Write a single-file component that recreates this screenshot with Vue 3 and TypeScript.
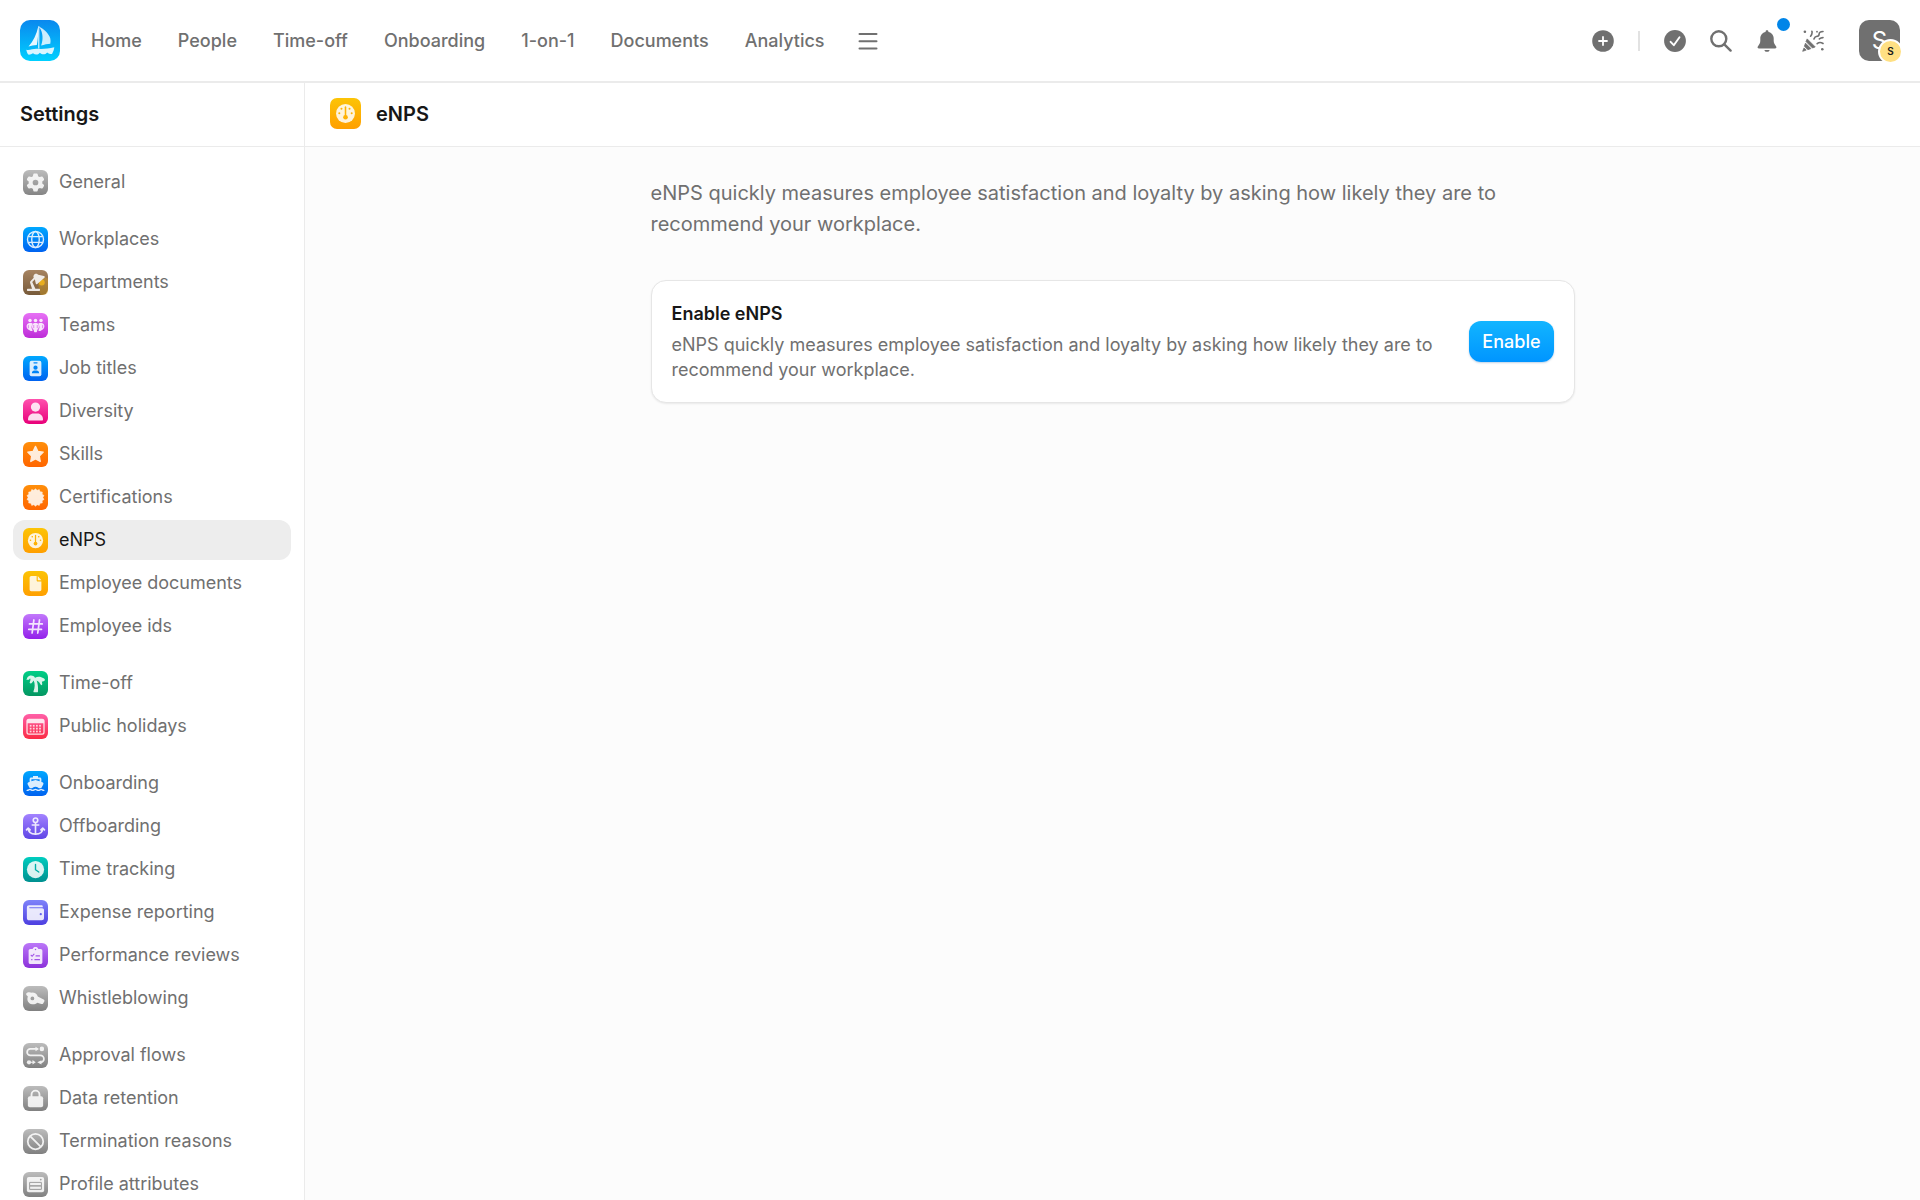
<script setup lang="ts">
interface NavItem {
  label: string
  icon: string
  from: string
  to: string
  active?: boolean
}

const mainNav: string[] = ['Home', 'People', 'Time-off', 'Onboarding', '1-on-1', 'Documents', 'Analytics']

const burst = (points: number, outer: number, inner: number): string =>
  Array.from({ length: points * 2 }, (_, i) => {
    const r = i % 2 ? inner : outer
    const a = (Math.PI * i) / points - Math.PI / 2
    return `${(10 + r * Math.cos(a)).toFixed(2)},${(10 + r * Math.sin(a)).toFixed(2)}`
  }).join(' ')

const calendarDots = [8.7, 11, 13.3]
  .flatMap((y) => [5.4, 7.9, 10.4, 12.9].map((x) => `<rect x="${x}" y="${y}" width="1.4" height="1.4"/>`))
  .join('')

/* Glyphs on a 20 × 20 grid; currentColor is the tile colour and is used for cut-outs. */
const glyphs: Record<string, string> = {
  gear: '<path transform="translate(2.7 2.7) scale(.0285)" d="M495.9 166.6c3.2 8.7 .5 18.4-6.4 24.6l-43.3 39.4c1.1 8.3 1.7 16.8 1.7 25.4s-.6 17.1-1.7 25.4l43.3 39.4c6.9 6.2 9.6 15.9 6.4 24.6c-4.4 11.9-9.7 23.3-15.8 34.3l-4.7 8.1c-6.6 11-14 21.4-22.1 31.2c-5.9 7.2-15.7 9.6-24.5 6.8l-55.7-17.7c-13.4 10.3-28.2 18.9-44 25.4l-12.5 57.1c-2 9.1-9 16.3-18.2 17.8c-13.8 2.3-28 3.5-42.5 3.5s-28.7-1.2-42.5-3.5c-9.2-1.5-16.2-8.7-18.2-17.8l-12.5-57.1c-15.8-6.5-30.6-15.1-44-25.4L83.1 425.9c-8.8 2.8-18.6 .3-24.5-6.8c-8.1-9.8-15.5-20.2-22.1-31.2l-4.7-8.1c-6.1-11-11.4-22.4-15.8-34.3c-3.2-8.7-.5-18.4 6.4-24.6l43.3-39.4C64.6 273.1 64 264.6 64 256s.6-17.1 1.7-25.4L22.4 191.2c-6.9-6.2-9.6-15.9-6.4-24.6c4.4-11.9 9.7-23.3 15.8-34.3l4.7-8.1c6.6-11 14-21.4 22.1-31.2c5.9-7.2 15.7-9.6 24.5-6.8l55.7 17.7c13.4-10.3 28.2-18.9 44-25.4l12.5-57.1c2-9.1 9-16.3 18.2-17.8C227.3 1.2 241.5 0 256 0s28.7 1.2 42.5 3.5c9.2 1.5 16.2 8.7 18.2 17.8l12.5 57.1c15.8 6.5 30.6 15.1 44 25.4l55.7-17.7c8.800-2.8 18.600-.3 24.500 6.800c8.100 9.800 15.500 20.200 22.100 31.200l4.700 8.100c6.100 11 11.400 22.400 15.800 34.300zM256 336a80 80 0 1 0 0-160 80 80 0 1 0 0 160z"/>',
  globe: '<g fill="none" stroke="#fff" stroke-width="1.1"><circle cx="10" cy="10" r="6.4"/><ellipse cx="10" cy="10" rx="3" ry="6.4"/><path d="M4.2 7.7h11.6M4.2 12.3h11.6"/></g>',
  lamp: '<path d="M17.2 5.5 20 7v9.5a3.5 3.5 0 0 1-3.5 3.5H14l-2-8.6z" fill="#e0a31c" opacity=".45"/><circle cx="15" cy="10" r="2.4" fill="#f7b918"/><path d="M8.6 6.2C7.9 4.7 9 3 10.5 3c.8 0 1.2.4 1.7.8l4.5.9c.8.2.9.9.4 1.4l-5.7 5c-.5.5-1.1.2-1.2-.4l-.7-3.4-2.1 2.300 2.500 5.300H13c.9 0 .9 1.900 0 1.900H3.800c-.9 0-.9-1.900 0-1.900h3.400L5.800 10.500c-.3-.7-.2-1.200.3-1.700z"/>',
  teams: '<circle cx="5.6" cy="5.9" r="1.4"/><circle cx="10" cy="5.9" r="1.4"/><circle cx="14.4" cy="5.9" r="1.4"/><path d="M5 8h1.600c.6 0 1 .3 1.200.7-1.300 1.600-1.300 3.500 0 5.100-.3.500-.8.700-1.300.7-.6 0-1.200-.3-1.500-.9C2.200 12.800 2.100 8.400 5 8zM15 8h-1.600c-.6 0-1 .3-1.200.7 1.300 1.600 1.300 3.500 0 5.100.3.500.8.700 1.300.7.6 0 1.200-.3 1.500-.9 2.800-.8 2.900-5.200 0-5.600z"/><path d="M9.300 8h1.400c2.400.4 2.700 4 .8 5.400l-.3 1.400c-.2.900-2.200.9-2.400 0l-.3-1.400C6.600 12 6.900 8.400 9.300 8z"/><g fill="none" stroke="currentColor" stroke-width=".5"><path d="M8.600 9.600v2.500M11.400 9.600v2.500M4.300 9.700v2.400M15.700 9.700v2.400"/></g>',
  badge: '<rect x="5.3" y="3.8" width="9.4" height="12.4" rx="1.5"/><g fill="currentColor"><rect x="8.3" y="5" width="3.4" height=".9" rx=".45"/><circle cx="10" cy="9.3" r="1.7"/><path d="M7.100 13.800c0-1.500.9-2.200 2-2.200h1.800c1.100 0 2 .7 2 2.200z"/></g>',
  person: '<circle cx="10" cy="6.4" r="3.7"/><path d="M4 16.500c0-3.200 2-5 4.400-5h3.200c2.400 0 4.400 1.800 4.400 5 0 .4-.2.600-.6.600H4.600c-.4 0-.6-.2-.6-.6z"/>',
  star: '<path d="m10 3.500 1.900 4 4.300.6-3.100 3.100.7 4.400-3.800-2.100-3.800 2.100.7-4.400-3.100-3.100 4.300-.6z" stroke="#fff" stroke-width="1" stroke-linejoin="round"/>',
  seal: `<polygon points="${burst(14, 7, 5.9)}" stroke="#fff" stroke-width=".4" stroke-linejoin="round"/>`,
  gauge: '<circle cx="10" cy="10" r="6.1"/><g fill="currentColor"><circle cx="7.4" cy="7" r=".65"/><circle cx="12.6" cy="7" r=".65"/><circle cx="6" cy="9.8" r=".65"/><circle cx="14" cy="9.8" r=".65"/><circle cx="10" cy="12.4" r="1.5"/><rect x="9.5" y="5.4" width="1" height="7" rx=".5"/></g>',
  doc: '<path d="M6.700 4h4.200v3.300c0 .6.400 1 1 1h2.800v6.500c0 .8-.6 1.400-1.400 1.400H6.700c-.8 0-1.400-.6-1.400-1.400V5.400C5.300 4.600 5.900 4 6.700 4z"/><path d="M11.800 4 14.700 7.300h-2.900z"/>',
  hash: '<path d="M8.700 4.800 7.300 15.200M13.200 4.800l-1.400 10.400M5.200 7.900h10.200M4.600 12.200h10.200" fill="none" stroke="#fff" stroke-width="1.4" stroke-linecap="round"/>',
  palm: '<path d="M9.700 5.500C8.400 3.300 5.300 2.900 3.600 5l-.9 1.900 2 0 1-1.200.3 1.200-.7 2.400c0 1 1.500.8 2.200-.3l1-1.400c1.300 2.600 1 5.700-.1 8.600-.2.500.1.900.6.900h2.300c.4 0 .7-.3.700-.7.200-3.300-.1-6-1.100-8.700l1.900 1.100 1.300 2.100c.6.800 1.300.3 1.300-.5l-.3-2 .9 0 1.100-.6c1-.4.2-1.400-.6-1.900-2-1.300-4.600-1.900-6.800-.4z"/>',
  calendar: `<rect x="3.2" y="4.2" width="13.6" height="11.8" rx="1.5" fill="none" stroke="#fff" stroke-width="1"/><path d="M3.200 7.400V5.600c0-.8.600-1.400 1.400-1.400h10.800c.8 0 1.400.6 1.400 1.400v1.800z"/><g opacity=".9">${calendarDots}</g>`,
  ship: '<path d="M8 3.900h4v1.200h1.400c.8 0 1.300.5 1.300 1.300v2.300l.9.300c.8.300 1 1.100.6 1.800l-1.400 2.500c-1 .7-1.800.7-2.600 0-1.200-1-3.200-1-4.400 0-.8.700-1.600.7-2.600 0L3.800 10.800c-.4-.7-.2-1.500.6-1.800l.9-.3V6.400c0-.8.500-1.300 1.300-1.300H8z"/><path d="M6.700 6.500h6.600v1.700L10 7.200l-3.300 1z" fill="currentColor"/><path d="M3.300 15.500c1.100 0 1.500-.7 2.200-.7s1.200.7 2.200.7 1.500-.7 2.300-.7 1.200.7 2.300.7 1.500-.7 2.200-.7 1.100.7 2.200.7" fill="none" stroke="#fff" stroke-width="1" stroke-linecap="round"/>',
  anchor: '<circle cx="10" cy="5" r="1.8" fill="none" stroke="#fff" stroke-width="1.3"/><path d="M10 7v9M7.400 8.800h5.200" fill="none" stroke="#fff" stroke-width="1.3" stroke-linecap="round"/><path d="M4.200 11.400c0 2.800 1.900 4.700 5.800 4.700s5.800-1.900 5.800-4.700M2.800 12.700l1.400-1.500 1.500 1.500M14.300 12.700l1.500-1.500 1.400 1.500" fill="none" stroke="#fff" stroke-width="1.3" stroke-linecap="round" stroke-linejoin="round"/>',
  clock: '<circle cx="10" cy="10" r="6.9"/><path d="M10 6v4.200l2.600 1.800" fill="none" stroke="currentColor" stroke-width="1.1" stroke-linecap="round"/>',
  wallet: '<path d="M4.800 4.200h10c.6 0 1 .4 1 1v.5H5.400c-.7 0-.7.800 0 .8h9.900c.9 0 1.500.6 1.500 1.500v6.400c0 1.100-.7 1.800-1.800 1.800H5c-1.200 0-1.900-.7-1.900-1.900V6c0-1.100.7-1.800 1.700-1.800z"/><circle cx="14.2" cy="11.3" r=".9" fill="currentColor"/>',
  clipboard: '<path d="M6 4.800h1.700C8 3.600 8.900 3.100 10 3.100s2 .5 2.300 1.700H14c.9 0 1.500.6 1.500 1.500v9c0 .9-.6 1.500-1.500 1.500H6c-.9 0-1.500-.6-1.500-1.500v-9c0-.9.600-1.500 1.500-1.500z"/><g fill="none" stroke="currentColor" stroke-width=".9" stroke-linecap="round"><path d="m6.500 9.800.8.800 1.500-1.700M10.400 10.300h2.800M9.500 13.300h3.700M6.900 13.300h.3"/></g><circle cx="10" cy="5.1" r=".6" fill="currentColor"/>',
  whistle: '<path d="M3 5.500c1.700-.8 3.200-.2 4-.2 2.500-.1 4.200 1.300 4.800 3l4.700 2.500c.7.400.8 1 .5 1.600l-.9 1.600c-.3.500-.8.600-1.400.4l-3.300-1c-3 2.600-7.600 1-7.900-2.900 0-.9.100-1.500.4-2.200C2.700 7.600 2 6.400 3 5.500z"/><circle cx="7.5" cy="9.9" r="1.5" fill="currentColor"/>',
  flow: '<path d="M7.500 4.700H5.900a2.600 2.600 0 0 0 0 5.200h8a2.800 2.800 0 0 1 0 5.600M7.500 4.700H11" fill="none" stroke="#fff" stroke-width="1.4" stroke-linecap="round"/><path d="m10 2.900 2.800 1.800L10 6.500z"/><circle cx="15.1" cy="4.7" r="1.8"/><circle cx="4.8" cy="15.4" r="1.7"/><path d="M6 14.900h1.600l0-1.300 2.600 1.800-2.600 1.800 0-1.300H6zM14.800 13.700v3.500l-3.400-1.800z"/>',
  lock: '<path d="M6.800 9V6.900a3.200 3.200 0 0 1 6.400 0V9" fill="none" stroke="#fff" stroke-width="1.5"/><rect x="3.9" y="8.2" width="12.2" height="8.8" rx="1.6"/>',
  ban: '<circle cx="10" cy="10" r="6.2" fill="none" stroke="#fff" stroke-width="1.4"/><path d="m5.700 5.700 8.600 8.600" stroke="#fff" stroke-width="1.4"/>',
  form: '<rect x="3.1" y="4" width="13.8" height="12.2" rx="1.6"/><g fill="none" stroke="currentColor" stroke-width=".8"><path d="M5.300 8.300h9.400v2.800H5.300zM5.300 11.100h9.400v2.800H5.300z"/></g><circle cx="14.2" cy="6" r=".7" fill="currentColor"/>',
}

const groups: NavItem[][] = [
  [{ label: 'General', icon: 'gear', from: '#bcbcbc', to: '#858585' }],
  [
    { label: 'Workplaces', icon: 'globe', from: '#00a8ff', to: '#0062f0' },
    { label: 'Departments', icon: 'lamp', from: '#a78461', to: '#775a3a' },
    { label: 'Teams', icon: 'teams', from: '#e771f5', to: '#bd2bd8' },
    { label: 'Job titles', icon: 'badge', from: '#00a8ff', to: '#0062f0' },
    { label: 'Diversity', icon: 'person', from: '#ff52ae', to: '#e80079' },
    { label: 'Skills', icon: 'star', from: '#ff8f0a', to: '#ff6500' },
    { label: 'Certifications', icon: 'seal', from: '#ff8f0a', to: '#ff6500' },
    { label: 'eNPS', icon: 'gauge', from: '#fcc406', to: '#ff9f00', active: true },
    { label: 'Employee documents', icon: 'doc', from: '#fcc406', to: '#ff9f00' },
    { label: 'Employee ids', icon: 'hash', from: '#c278fb', to: '#9320ea' },
  ],
  [
    { label: 'Time-off', icon: 'palm', from: '#00cf87', to: '#049661' },
    { label: 'Public holidays', icon: 'calendar', from: '#ff5fa8', to: '#fb2c44' },
  ],
  [
    { label: 'Onboarding', icon: 'ship', from: '#00a8ff', to: '#0062f0' },
    { label: 'Offboarding', icon: 'anchor', from: '#a383ff', to: '#5f45e6' },
    { label: 'Time tracking', icon: 'clock', from: '#00cdbf', to: '#009090' },
    { label: 'Expense reporting', icon: 'wallet', from: '#7f83fa', to: '#4d3fe0' },
    { label: 'Performance reviews', icon: 'clipboard', from: '#bb77f8', to: '#8b31da' },
    { label: 'Whistleblowing', icon: 'whistle', from: '#bcbcbc', to: '#808080' },
  ],
  [
    { label: 'Approval flows', icon: 'flow', from: '#bcbcbc', to: '#808080' },
    { label: 'Data retention', icon: 'lock', from: '#bcbcbc', to: '#808080' },
    { label: 'Termination reasons', icon: 'ban', from: '#bcbcbc', to: '#808080' },
    { label: 'Profile attributes', icon: 'form', from: '#bcbcbc', to: '#808080' },
  ],
]

const tileStyle = (from: string, to: string) => ({
  background: `linear-gradient(${from}, ${to})`,
  color: `color-mix(in srgb, ${from}, ${to})`,
})
</script>

<template>
  <div class="app">
    <header class="topbar">
      <a class="logo" href="#" aria-label="Home page">
        <svg viewBox="0 0 40 40" fill="#fff">
          <path d="M18.2 6.200c.3 6.800-.4 13-1.400 18.400-2.800.2-5.600.7-8.300 1.500C13.300 20.400 16.600 14 18.200 6.200z" opacity=".9" />
          <path d="M18.600 6c5.700 2.300 10.600 7.700 11.700 12 .4 1.700.4 3.400 0 5.200-2.800.1-6 .8-9.200 1.900 2.400-6.600 1.800-13-1.300-17.700z" opacity=".8" />
          <path d="M18.300 5.800h1V28h-1z" />
          <path d="M6.300 29.200c3 .9 6.600-1 10.300-.9 6 .3 11.400.1 17.700-1.500-.3 2.300-1 4.600-2.300 6.700-1.700.1-3.300-.5-4.800-1.600-2 2.300-4.900 2.600-7.300.3-2 2.400-4.700 2.500-6.900.5-1.500 1.100-3.100 1.600-4.800 1.400-1-1.500-1.600-3-1.900-4.900z" opacity=".85" />
        </svg>
      </a>
      <nav class="main-nav" aria-label="Main">
        <a v-for="item in mainNav" :key="item" href="#">{{ item }}</a>
        <button class="icon-button menu" type="button" aria-label="More">
          <svg viewBox="0 0 22 22" fill="none" stroke="currentColor" stroke-width="2" stroke-linecap="round">
            <path d="M2.500 4h17M2.500 11.200h17M2.500 18.400h17" />
          </svg>
        </button>
      </nav>
      <div class="tools">
        <button class="icon-button" type="button" aria-label="Add">
          <svg viewBox="0 0 22 22">
            <circle cx="11" cy="11" r="10.8" fill="currentColor" />
            <path d="M11 7v8M7 11h8" stroke="#fff" stroke-width="1.8" stroke-linecap="round" />
          </svg>
        </button>
        <span class="divider"></span>
        <button class="icon-button" type="button" aria-label="Tasks">
          <svg viewBox="0 0 22 22">
            <circle cx="11" cy="11" r="10.9" fill="currentColor" />
            <path d="m6.600 11.800 3.200 3.400 5.700-8" fill="none" stroke="#fff" stroke-width="1.9" stroke-linecap="round" stroke-linejoin="round" />
          </svg>
        </button>
        <button class="icon-button" type="button" aria-label="Search">
          <svg viewBox="0 0 22 22" fill="none" stroke="currentColor" stroke-width="2.4" stroke-linecap="round">
            <circle cx="8.8" cy="8.8" r="7.5" />
            <path d="m14.300 14.300 6.300 6.300" />
          </svg>
        </button>
        <button class="icon-button" type="button" aria-label="Notifications">
          <svg viewBox="0 0 22 22" fill="currentColor">
            <path d="M11 .3c.8 0 1.400.5 1.400 1.300v.5c3.200.7 5.300 3.200 5.300 6.400v2.300c0 2 .8 3.600 2.300 5.500.9 1.100.4 2.300-1 2.300H3c-1.400 0-1.900-1.200-1-2.300 1.500-1.900 2.300-3.500 2.300-5.500V8.500c0-3.200 2.100-5.700 5.300-6.400v-.5C9.600.8 10.200.3 11 .3zM8.400 19.900h5.200c-.2 1.200-1.200 1.900-2.600 1.900s-2.400-.7-2.600-1.900z" />
          </svg>
          <span class="dot"></span>
        </button>
        <button class="icon-button" type="button" aria-label="What's new">
          <svg viewBox="0 0 22 22" fill="currentColor">
            <g stroke="currentColor" stroke-width=".8" stroke-linejoin="round">
              <path d="M.7 21.300 2 17.900l2.200 2.200z" />
              <path d="M2.400 16.200 3.500 13.200l5.400 5.400-3 1.100z" />
              <path d="M4 11.500 5.200 8.900l8 8-2.700 1.100z" />
            </g>
            <g fill="none" stroke="currentColor" stroke-width="1.6" stroke-linecap="round">
              <path d="M9.900 1.200c.5 1.800.2 3.300-1.300 5M21 1.500c-2.600.1-3.900.9-3.900 2.700 0 1.600-1 2.200-2.800 2.300-1.200.1-1.700 1-2.300 2.400M21 7.600c-1.600 0-2.600.4-3.600 1.300M15.200 13.700c1.600-1.400 3.800-1.500 5.800-.2" />
            </g>
            <circle cx="2.900" cy="1.800" r="1.300" />
            <circle cx="20.300" cy="19.300" r="1.300" />
            <circle cx="15" cy="1.700" r=".9" />
          </svg>
        </button>
        <button class="avatar" type="button" aria-label="Account">S<span class="avatar-badge">S</span></button>
      </div>
    </header>

    <div class="body">
      <aside class="sidebar">
        <h2 class="pane-head">Settings</h2>
        <nav class="side-nav" aria-label="Settings">
          <ul v-for="(group, index) in groups" :key="index" class="group">
            <li v-for="item in group" :key="item.label">
              <a href="#" class="row" :class="{ active: item.active }" :aria-current="item.active ? 'page' : undefined">
                <span class="tile" :style="tileStyle(item.from, item.to)">
                  <svg viewBox="0 0 20 20"><g fill="#fff" v-html="glyphs[item.icon]"></g></svg>
                </span>
                {{ item.label }}
              </a>
            </li>
          </ul>
        </nav>
      </aside>

      <main class="content">
        <div class="pane-head">
          <span class="tile large" :style="tileStyle('#fcc406', '#ff9f00')">
            <svg viewBox="0 0 20 20"><g fill="#fff" v-html="glyphs.gauge"></g></svg>
          </span>
          <h1>eNPS</h1>
        </div>
        <div class="page">
          <p class="intro">
            eNPS quickly measures employee satisfaction and loyalty by asking how likely they are to recommend your
            workplace.
          </p>
          <section class="card">
            <div class="card-text">
              <h3>Enable eNPS</h3>
              <p>
                eNPS quickly measures employee satisfaction and loyalty by asking how likely they are to recommend your
                workplace.
              </p>
            </div>
            <button class="primary" type="button">Enable</button>
          </section>
        </div>
      </main>
    </div>
  </div>
</template>

<style>
body {
  margin: 0;
  background: #fff;
}
</style>

<style scoped>
.app {
  display: flex;
  flex-direction: column;
  height: 100vh;
  overflow: hidden;
  font-family: Inter, "Liberation Sans", sans-serif;
  font-size: 18px;
  line-height: 26px;
  color: #707070;
}

h1,
h2,
h3,
p,
ul {
  margin: 0;
  padding: 0;
}

a {
  color: inherit;
  text-decoration: none;
}

button {
  border: 0;
  padding: 0;
  font: inherit;
  cursor: pointer;
}

svg {
  display: block;
  width: 100%;
  height: 100%;
}

.topbar {
  display: flex;
  align-items: center;
  flex: none;
  height: 81px;
  padding: 0 20px;
  border-bottom: 2px solid #ebebeb;
  background: #fff;
}

.logo {
  flex: none;
  width: 40px;
  height: 41px;
  border-radius: 10px;
  background: linear-gradient(#0a88ee, #00d0ff);
}

.main-nav {
  display: flex;
  align-items: center;
  gap: 36px;
  margin-left: 31px;
  font-weight: 500;
}

.icon-button {
  position: relative;
  flex: none;
  width: 22px;
  height: 22px;
  background: none;
  color: #707070;
}

.menu {
  margin-left: -4px;
}

.tools {
  display: flex;
  align-items: center;
  gap: 24px;
  margin-left: auto;
}

.divider {
  width: 2px;
  height: 20px;
  background: #e2e2e2;
}

.dot {
  position: absolute;
  top: -12px;
  right: -12px;
  width: 13px;
  height: 13px;
  border-radius: 50%;
  background: #0085e8;
}

.avatar {
  position: relative;
  width: 41px;
  height: 41px;
  margin-left: 11px;
  border-radius: 10px;
  background: #707070;
  color: #fff;
  font-size: 24px;
}

.avatar-badge {
  position: absolute;
  right: -3px;
  bottom: -3px;
  width: 21px;
  height: 21px;
  border: 2px solid #fff;
  border-radius: 50%;
  background: #ffe083;
  color: #171717;
  font-size: 10px;
  font-weight: 600;
  line-height: 21px;
}

.body {
  display: flex;
  flex: 1;
  min-height: 0;
}

.sidebar {
  display: flex;
  flex-direction: column;
  flex: none;
  width: 304px;
  border-right: 1px solid #ebebeb;
  background: #fff;
}

.pane-head {
  display: flex;
  align-items: center;
  flex: none;
  height: 61px;
  padding: 0 20px 2px;
  border-bottom: 1px solid #ebebeb;
  background: #fff;
  color: #171717;
  font-size: 20px;
  font-weight: 600;
  font-optical-sizing: none;
}

.side-nav {
  display: flex;
  flex-direction: column;
  gap: 17px;
  min-height: 0;
  padding: 15px 13px;
  overflow-y: auto;
  scrollbar-width: none;
}

.group {
  display: flex;
  flex-direction: column;
  gap: 3px;
  list-style: none;
}

.row {
  display: flex;
  align-items: center;
  gap: 11px;
  height: 40px;
  padding: 0 10px;
  border-radius: 12px;
}

.row.active {
  background: #ededed;
  color: #171717;
}

.tile {
  flex: none;
  width: 25px;
  height: 25px;
  border-radius: 6px;
}

.tile svg {
  opacity: 0.86;
}

.tile.large {
  width: 31px;
  height: 31px;
  border-radius: 7px;
}

.content {
  display: flex;
  flex-direction: column;
  flex: 1;
  min-width: 0;
  background: #fcfcfc;
}

.content .pane-head {
  gap: 15px;
  padding: 0 25px 2px;
}

h1 {
  font: inherit;
  font-optical-sizing: none;
}

.page {
  width: 100%;
  max-width: 924px;
  margin: 0 auto;
  padding: 31px 0;
}

.intro {
  font-size: 20px;
  line-height: 31px;
  font-optical-sizing: none;
}

.card {
  display: flex;
  align-items: center;
  gap: 20px;
  margin-top: 40px;
  padding: 20px;
  border: 1px solid #e6e6e6;
  border-radius: 15px;
  background: #fff;
  box-shadow: 0 1px 2px rgba(0, 0, 0, 0.08);
}

.card-text {
  display: flex;
  flex-direction: column;
  flex: 1;
  gap: 5px;
  line-height: 25px;
}

h3 {
  color: #171717;
  font-size: 18px;
  font-weight: 600;
  line-height: 26px;
}

.primary {
  flex: none;
  height: 41px;
  padding: 0 13px;
  border-radius: 12px;
  background: linear-gradient(#12b5ff, #0095ff);
  box-shadow: 0 1px 2px rgba(0, 80, 160, 0.25);
  color: #fff;
  font-weight: 500;
}
</style>
